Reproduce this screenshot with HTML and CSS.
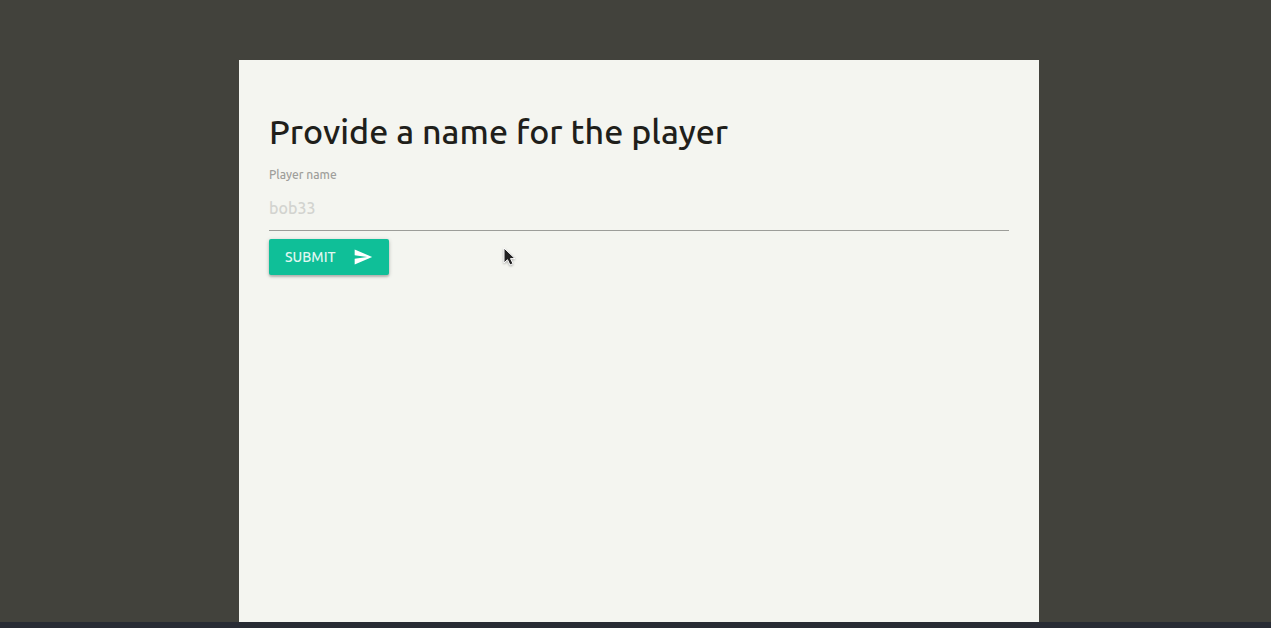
FILE: index.html
```html
<!DOCTYPE html>
<html lang="en">
<head>
<meta charset="utf-8">
<meta name="viewport" content="width=device-width, initial-scale=1">
<title>Player name</title>
<link rel="stylesheet" href="styles.css">
</head>
<body>
<div class="page">
  <main class="panel">
    <h1 class="title">Provide a name for the player</h1>
    <form class="form">
      <label class="label" for="player-name">Player name</label>
      <input class="field" id="player-name" type="text" placeholder="bob33">
      <button class="submit" type="submit">
        <span>SUBMIT</span>
        <svg class="send" viewBox="0 0 24 24" aria-hidden="true"><path d="M2.01 21L23 12 2.01 3 2 10l15 2-15 2z"/></svg>
      </button>
    </form>
  </main>
</div>
<footer class="bottom-bar"></footer>
<svg class="pointer" viewBox="0 0 14 21" aria-hidden="true"><path d="M2 2v15l3.500-3.300 2.500 5.300 3-1.400-2.500-5H13z"/></svg>
</body>
</html>
```
FILE: styles.css
```css
* { box-sizing: border-box; }

body {
  margin: 0;
  min-height: 100vh;
  display: flex;
  flex-direction: column;
  background: #42423c;
  color: #1f1f1b;
  font-family: Ubuntu, "Noto Sans", sans-serif;
  font-weight: 500;
}

.page {
  flex: 1;
  display: flex;
  justify-content: center;
  padding: 60px 0 0 7px;
}

.panel {
  width: 100%;
  max-width: 800px;
  padding: 51px 30px 30px;
  background: #f4f5f0;
}

.title {
  margin: 0 0 15px;
  font-size: 34px;
  line-height: 40px;
  font-weight: 500;
}

.form {
  display: flex;
  flex-direction: column;
  align-items: flex-start;
}

.label {
  font-size: 12px;
  line-height: 18px;
  color: #9f9f9b;
}

.field {
  width: 100%;
  height: 47px;
  margin-bottom: 8px;
  padding: 2px 0 0;
  border: 0;
  border-bottom: 1px solid #9c9d99;
  border-radius: 0;
  outline: 0;
  background: transparent;
  color: #1f1f1b;
  font: inherit;
  font-size: 16px;
}

.field::placeholder {
  color: #d2d3cf;
  opacity: 1;
}

.submit {
  display: flex;
  align-items: center;
  gap: 17px;
  height: 36px;
  padding: 0 16px;
  border: 0;
  border-radius: 2px;
  background: #0fbf98;
  box-shadow: 0 2px 2px rgba(0, 0, 0, 0.16), 0 1px 4px rgba(0, 0, 0, 0.2);
  color: #e0f7f1;
  font: inherit;
  font-size: 14px;
}

.send {
  width: 20px;
  height: 20px;
  fill: #fff;
}

.bottom-bar {
  height: 6px;
  background: #282b34;
}

.pointer {
  position: absolute;
  left: 502px;
  top: 246px;
  width: 14px;
  height: 21px;
  fill: #222;
  stroke: #fff;
  stroke-width: 1;
  filter: drop-shadow(0 1px 1px rgba(0, 0, 0, 0.3));
  pointer-events: none;
}
```
